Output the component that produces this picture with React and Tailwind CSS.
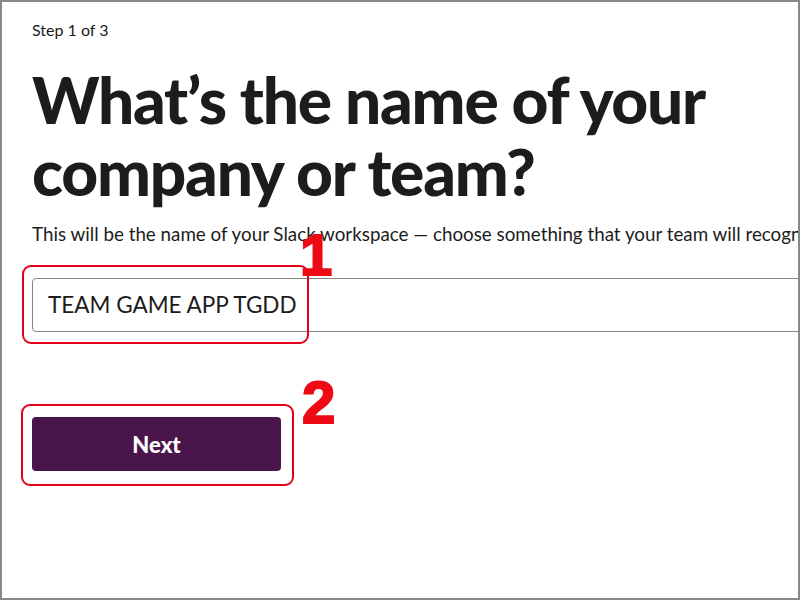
import React from 'react';

const Marker = ({ n, className }) => (
  <span
    className={`absolute text-[#ee0a14] font-bold leading-none [-webkit-text-stroke:2px_#ee0a14] ${className}`}
    style={{ fontFamily: '"Liberation Sans", Arial, sans-serif' }}
  >
    {n}
  </span>
);

const Callout = ({ className }) => (
  <div className={`absolute border-2 border-[#e3001b] rounded-[9px] pointer-events-none ${className}`} />
);

function App() {
  return (
    <div className="w-[800px] h-[600px] border-2 border-[#888888] bg-white overflow-hidden font-['Lato',sans-serif] text-[#1d1c1d]">
      <div className="w-[1100px] pl-[30px] pt-[19px] flex flex-col items-start">
        <p className="text-[16px] leading-[18px]">Step 1 of 3</p>

        <h1 className="mt-[25px] text-[64px] leading-[72px] font-black tracking-[-1.2px]">
          What’s the name of your
          <br />
          company or team?
        </h1>

        <p className="mt-[13px] text-[18.8px] leading-[26px] whitespace-nowrap">
          This will be the name of your Slack workspace — choose something that your team will recognize.
        </p>

        {/* input + callout 1 */}
        <div className="relative mt-[31px]">
          <div className="w-[1000px] h-[54px] border border-[#868686] rounded-[4px] flex items-center px-[15px]">
            <span className="text-[22.5px]">TEAM GAME APP TGDD</span>
          </div>
          <Callout className="-left-[10px] -top-[13px] w-[287px] h-[79px]" />
          <Marker n="1" className="left-[268px] -top-[52px] text-[58px]" />
        </div>

        {/* button + callout 2 */}
        <div className="relative mt-[85px]">
          <button className="w-[249px] h-[54px] rounded-[4px] bg-[#4a154b] text-white text-[22px] font-black">
            Next
          </button>
          <Callout className="-left-[11px] -top-[13px] w-[273px] h-[82px]" />
          <Marker n="2" className="left-[270px] -top-[44px] text-[60px]" />
        </div>
      </div>
    </div>
  );
}

export default App;
